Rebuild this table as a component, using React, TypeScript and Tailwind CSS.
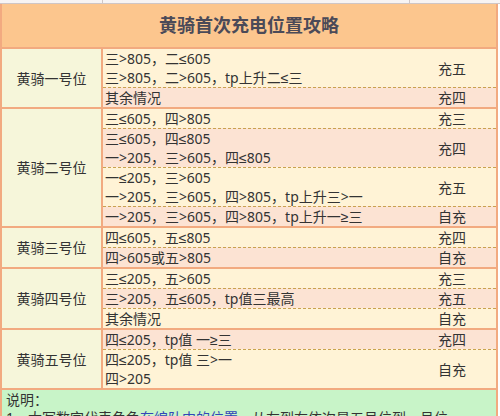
import React from "react";

type Row = { lines: string[]; r: string; pink: boolean };
type Group = { label: string; rows: Row[] };

const groups: Group[] = [
  {
    label: "黄骑一号位",
    rows: [
      { lines: ["三>805，二≤605", "三>805，二>605，tp上升二≤三"], r: "充五", pink: false },
      { lines: ["其余情况"], r: "充四", pink: true },
    ],
  },
  {
    label: "黄骑二号位",
    rows: [
      { lines: ["三≤605，四>805"], r: "充三", pink: false },
      { lines: ["三≤605，四≤805", "一>205，三>605，四≤805"], r: "充四", pink: true },
      { lines: ["一≤205，三>605", "一>205，三>605，四>805，tp上升三>一"], r: "充五", pink: false },
      { lines: ["一>205，三>605，四>805，tp上升一≥三"], r: "自充", pink: true },
    ],
  },
  {
    label: "黄骑三号位",
    rows: [
      { lines: ["四≤605，五≤805"], r: "充四", pink: false },
      { lines: ["四>605或五>805"], r: "自充", pink: true },
    ],
  },
  {
    label: "黄骑四号位",
    rows: [
      { lines: ["三≤205，五>605"], r: "充三", pink: false },
      { lines: ["三>205，五≤605，tp值三最高"], r: "充五", pink: true },
      { lines: ["其余情况"], r: "自充", pink: false },
    ],
  },
  {
    label: "黄骑五号位",
    rows: [
      { lines: ["四≤205，tp值 一≥三"], r: "充四", pink: true },
      { lines: ["四≤205，tp值 三>一", "四>205"], r: "自充", pink: false },
    ],
  },
];

export default function App() {
  return (
    <div className="w-[500px] h-[416px] overflow-hidden bg-white font-['Noto_Sans','Liberation_Sans','Noto_Sans_CJK_SC',sans-serif] text-[14px] text-[#333]">
      <div className="flex h-[4px] border-b border-[#cfc6c6] bg-[#f7f4f4]">
        <div className="w-[103px] border-r border-[#cfc6c6]" />
        <div className="w-[307px] border-r border-[#cfc6c6]" />
      </div>
      <div className="w-[498px] border-x-2 border-[#f2aa80]">
        <div className="flex h-[45px] items-center justify-center border-b-2 border-[#f2aa80] bg-[#fcc68e] text-[18px] font-bold text-[#4b4a58]">
          黄骑首次充电位置攻略
        </div>
        {groups.map((g) => (
          <div key={g.label} className="flex border-b-2 border-[#f2aa80]">
            <div className="flex w-[101px] shrink-0 items-center justify-center border-r-2 border-[#f2aa80] bg-[#f6f6da]">
              {g.label}
            </div>
            <div className="flex flex-1 flex-col">
              {g.rows.map((row, i) => (
                <div
                  key={i}
                  className={`flex items-center ${i > 0 ? "border-t border-dashed border-[#c9a250]" : ""} ${row.pink ? "bg-[#fce3d3]" : "bg-[#fff3d6]"}`}
                >
                  <div className="flex w-[333px] flex-col pl-[2px]">
                    {row.lines.map((l, j) => (
                      <div key={j} className="h-[19px] leading-[19px] whitespace-nowrap">
                        {l}
                      </div>
                    ))}
                  </div>
                  <div className="pl-[2px] leading-[19px]">{row.r}</div>
                </div>
              ))}
            </div>
          </div>
        ))}
        <div className="bg-[#c8f4c8] px-[4px] leading-[18px]">
          <div className="pt-[1px]">说明：</div>
          <div className="whitespace-nowrap">
            1、大写数字代表角色<span className="text-[#3346b8] underline">在编队中的位置</span>，从左到右依次是五号位到一号位
          </div>
        </div>
      </div>
    </div>
  );
}
